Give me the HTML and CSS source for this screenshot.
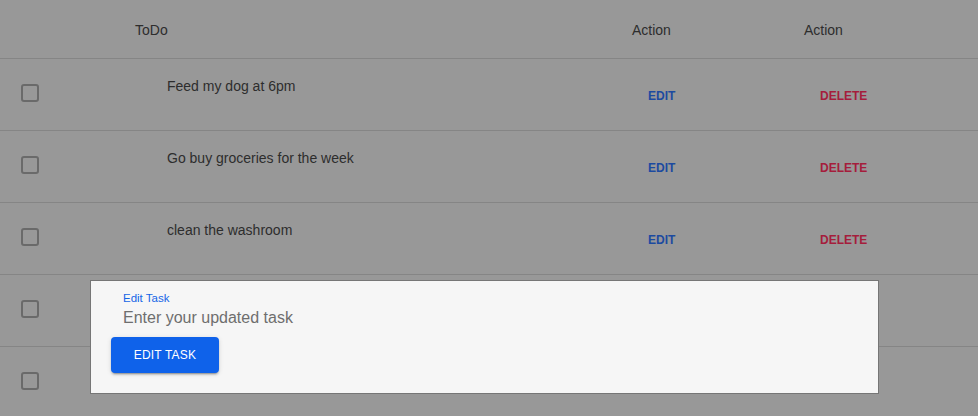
FILE: index.html
```html
<!DOCTYPE html>
<html lang="en">
<head>
<meta charset="utf-8">
<title>ToDo</title>
<link rel="stylesheet" href="styles.css">
</head>
<body>
<div class="table">
  <div class="row head">
    <div class="cell"></div>
    <div class="cell">ToDo</div>
    <div class="cell">Action</div>
    <div class="cell">Action</div>
  </div>
  <div class="row">
    <div class="cell check-cell"><span class="checkbox"></span></div>
    <div class="cell task">Feed my dog at 6pm</div>
    <div class="cell act"><span class="btn-text edit">EDIT</span></div>
    <div class="cell act"><span class="btn-text delete">DELETE</span></div>
  </div>
  <div class="row">
    <div class="cell check-cell"><span class="checkbox"></span></div>
    <div class="cell task">Go buy groceries for the week</div>
    <div class="cell act"><span class="btn-text edit">EDIT</span></div>
    <div class="cell act"><span class="btn-text delete">DELETE</span></div>
  </div>
  <div class="row">
    <div class="cell check-cell"><span class="checkbox"></span></div>
    <div class="cell task">clean the washroom</div>
    <div class="cell act"><span class="btn-text edit">EDIT</span></div>
    <div class="cell act"><span class="btn-text delete">DELETE</span></div>
  </div>
  <div class="row">
    <div class="cell check-cell"><span class="checkbox"></span></div>
    <div class="cell task">Pay the bills</div>
    <div class="cell act"><span class="btn-text edit">EDIT</span></div>
    <div class="cell act"><span class="btn-text delete">DELETE</span></div>
  </div>
  <div class="row">
    <div class="cell check-cell"><span class="checkbox"></span></div>
    <div class="cell task">Call mom</div>
    <div class="cell act"><span class="btn-text edit">EDIT</span></div>
    <div class="cell act"><span class="btn-text delete">DELETE</span></div>
  </div>
</div>

<div class="modal">
  <div class="field">
    <label class="field-label" for="task">Edit Task</label>
    <input class="field-input" id="task" type="text" placeholder="Enter your updated task">
  </div>
  <button class="submit" type="button">EDIT TASK</button>
</div>
</body>
</html>
```
FILE: styles.css
```css
* { box-sizing: border-box; }

html, body {
  margin: 0;
  padding: 0;
  height: 100%;
  overflow: hidden;
}

body {
  background: #989898;
  font-family: "Liberation Sans", Arial, sans-serif;
  color: #2d2d2d;
  font-size: 14px;
  position: relative;
}

.table {
  display: flex;
  flex-direction: column;
}

.row {
  display: grid;
  grid-template-columns: 135px 497px 172px 1fr;
  height: 72px;
  border-bottom: 1px solid #858585;
}

.row.head {
  height: 59px;
  align-items: center;
  padding-top: 1px;
}

.cell {
  line-height: 16px;
}

.check-cell {
  padding: 25px 0 0 21px;
}

.checkbox {
  display: block;
  width: 18px;
  height: 18px;
  border: 2px solid #6a6a6a;
  border-radius: 3px;
}

.task {
  padding: 19px 0 0 32px;
}

.act {
  padding: 28px 0 0 16px;
}

.btn-text {
  font-size: 12px;
  font-weight: bold;
  line-height: 14px;
}

.edit { color: #1c4aa0; }
.delete { color: #a51d3c; }

.modal {
  position: absolute;
  left: 90px;
  top: 280px;
  width: 789px;
  height: 114px;
  background: #f6f6f6;
  border: 1px solid #767676;
  padding: 11px 20px 0;
  display: flex;
  flex-direction: column;
  align-items: flex-start;
}

.field {
  margin-left: 12px;
  display: flex;
  flex-direction: column;
}

.field-label {
  font-size: 11.5px;
  line-height: 13px;
  color: #1565e6;
}

.field-input {
  margin-top: 3px;
  border: none;
  background: transparent;
  padding: 0;
  font-family: "Liberation Sans", Arial, sans-serif;
  font-size: 16px;
  line-height: 19px;
  height: 19px;
  width: 400px;
  outline: none;
}

.field-input::placeholder {
  color: #6e6e6e;
  opacity: 1;
}

.submit {
  margin-top: 10px;
  width: 108px;
  height: 36px;
  border: none;
  border-radius: 4px;
  background: #0f62ea;
  color: #ffffff;
  font-family: "Liberation Sans", Arial, sans-serif;
  font-size: 12px;
  letter-spacing: 0.2px;
  box-shadow: 0 3px 1px -2px rgba(0,0,0,0.2), 0 2px 2px 0 rgba(0,0,0,0.14), 0 1px 5px 0 rgba(0,0,0,0.12);
  cursor: pointer;
}
```
